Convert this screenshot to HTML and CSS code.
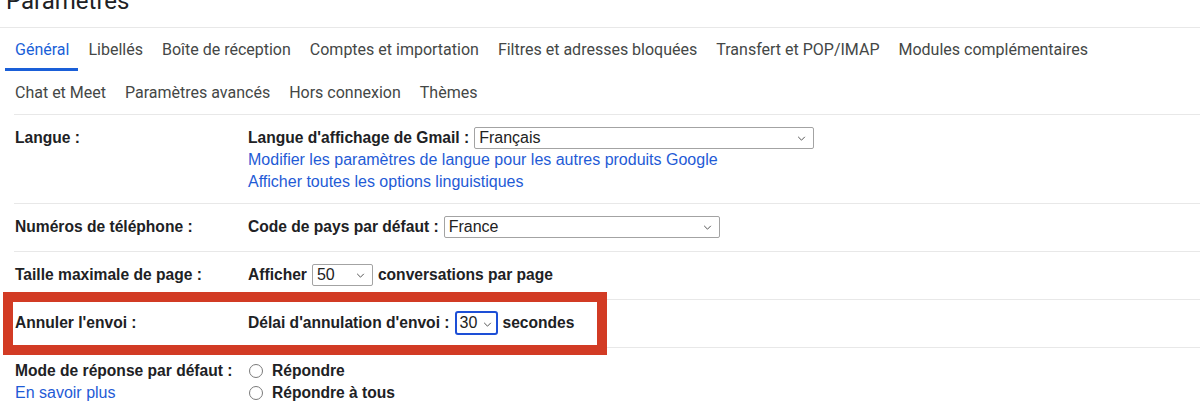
FILE: index.html
```html
<!DOCTYPE html>
<html lang="fr">
  <head>
    <meta charset="UTF-8" />
    <meta name="viewport" content="width=device-width, initial-scale=1.0" />
    <title>Paramètres</title>
    <link rel="stylesheet" href="styles.css">
  </head>
  <body>
    <header class="entete">
      <h1>Paramètres</h1>
    </header>

    <nav class="onglets">
      <a class="onglet valgt">Général</a>
      <a class="onglet">Libellés</a>
      <a class="onglet">Boîte de réception</a>
      <a class="onglet">Comptes et importation</a>
      <a class="onglet">Filtres et adresses bloquées</a>
      <a class="onglet">Transfert et POP/IMAP</a>
      <a class="onglet">Modules complémentaires</a>
      <a class="onglet">Chat et Meet</a>
      <a class="onglet">Paramètres avancés</a>
      <a class="onglet">Hors connexion</a>
      <a class="onglet">Thèmes</a>
    </nav>

    <section class="reglages">
      <div class="ligne premiere">
        <div class="etiquette">Langue :</div>
        <div class="valeur">
          <div class="champ">
            <b>Langue d'affichage de Gmail :</b>
            <span class="liste large">Français
              <svg viewBox="0 0 10 6"><path d="M1 1l4 4 4-4" /></svg>
            </span>
          </div>
          <a class="lien">Modifier les paramètres de langue pour les autres produits Google</a>
          <a class="lien">Afficher toutes les options linguistiques</a>
        </div>
      </div>

      <div class="ligne">
        <div class="etiquette">Numéros de téléphone :</div>
        <div class="valeur">
          <div class="champ">
            <b>Code de pays par défaut :</b>
            <span class="liste moyen">France
              <svg viewBox="0 0 10 6"><path d="M1 1l4 4 4-4" /></svg>
            </span>
          </div>
        </div>
      </div>

      <div class="ligne">
        <div class="etiquette">Taille maximale de page :</div>
        <div class="valeur">
          <div class="champ">
            <b>Afficher</b>
            <span class="liste petit">50
              <svg viewBox="0 0 10 6"><path d="M1 1l4 4 4-4" /></svg>
            </span>
            <b>conversations par page</b>
          </div>
        </div>
      </div>

      <div class="ligne marque">
        <div class="cadre"></div>
        <div class="etiquette">Annuler l'envoi :</div>
        <div class="valeur">
          <div class="champ">
            <b>Délai d'annulation d'envoi :</b>
            <span class="liste mini actif">30
              <svg viewBox="0 0 10 6"><path d="M1 1l4 4 4-4" /></svg>
            </span>
            <b>secondes</b>
          </div>
        </div>
      </div>

      <div class="ligne">
        <div class="etiquette">
          Mode de réponse par défaut :
          <a class="lien">En savoir plus</a>
        </div>
        <div class="valeur">
          <label class="choix"><span class="rond"></span><b>Répondre</b></label>
          <label class="choix"><span class="rond"></span><b>Répondre à tous</b></label>
        </div>
      </div>
    </section>
  </body>
</html>
```

FILE: styles.css
```css
body {
  margin: 0;
  font-family: "Liberation Sans", Arial, sans-serif;
  color: #202124;
  background: #fff;
  overflow: hidden;
}

/* titre coupé en haut */
.entete {
  display: flow-root;
  height: 27px;
  border-bottom: 1px solid #e8e8e8;
}
.entete h1 {
  margin: -13px 0 0 6px;
  font-family: Roboto, sans-serif;
  font-size: 24px;
  font-weight: 400;
  line-height: 28px;
}

/* onglets */
.onglets {
  display: flex;
  flex-wrap: wrap;
  max-width: 1120px;
  padding-left: 5px;
}
.onglet {
  height: 43px;
  box-sizing: border-box;
  padding: 3px 9px 0 10px;
  display: flex;
  align-items: center;
  font-family: Roboto, sans-serif;
  font-size: 16px;
  color: #444746;
  border-bottom: 3px solid transparent;
  cursor: pointer;
}
.onglet.valgt {
  color: #1a5fd8;
  border-bottom-color: #1a5fd8;
}

/* lignes de réglages */
.reglages {
  margin-left: 14px;
  border-top: 1px solid #e8e8e8;
}
.ligne {
  display: flex;
  padding: 12px 0 13px;
  border-bottom: 1px solid #e8e8e8;
  font-size: 15.6px;
  line-height: 22px;
}
.premiere {
  padding-bottom: 10px;
}
.etiquette {
  width: 233px;
  padding-left: 1px;
  font-weight: 700;
  display: flex;
  flex-direction: column;
}
.valeur {
  display: flex;
  flex-direction: column;
}
.champ {
  display: flex;
  align-items: center;
  gap: 5px;
  height: 22px;
}
.lien {
  color: #1f5bd6;
  font-weight: 400;
  font-size: 16px;
  cursor: pointer;
}

/* listes déroulantes */
.liste {
  position: relative;
  box-sizing: border-box;
  height: 22px;
  border: 1px solid #a3a3a3;
  border-radius: 2px;
  padding-left: 4px;
  display: flex;
  align-items: center;
  font-size: 16px;
  font-weight: 400;
  color: #222;
}
.liste svg {
  position: absolute;
  right: 7px;
  top: 8px;
  width: 9px;
  height: 5px;
  fill: none;
  stroke: #555;
  stroke-width: 1.2;
}
.large { width: 340px; }
.moyen { width: 276px; }
.petit { width: 61px; }
.mini  { width: 43px; height: 24px; }
.actif {
  border: 2px solid #1d4fd6;
  border-radius: 3px;
  padding-left: 3px;
}
.actif svg { right: 4px; top: 9px; }

/* cadre rouge autour de "Annuler l'envoi" */
.marque {
  position: relative;
}
.cadre {
  position: absolute;
  left: -11px;
  top: -8px;
  width: 584px;
  height: 43px;
  border: 10px solid #d23b24;
}

/* boutons radio */
.choix {
  display: flex;
  align-items: center;
  gap: 9px;
  height: 22px;
  margin-left: 1px;
}
.rond {
  width: 12px;
  height: 12px;
  border: 1px solid #7a7a7a;
  border-radius: 50%;
}
```
